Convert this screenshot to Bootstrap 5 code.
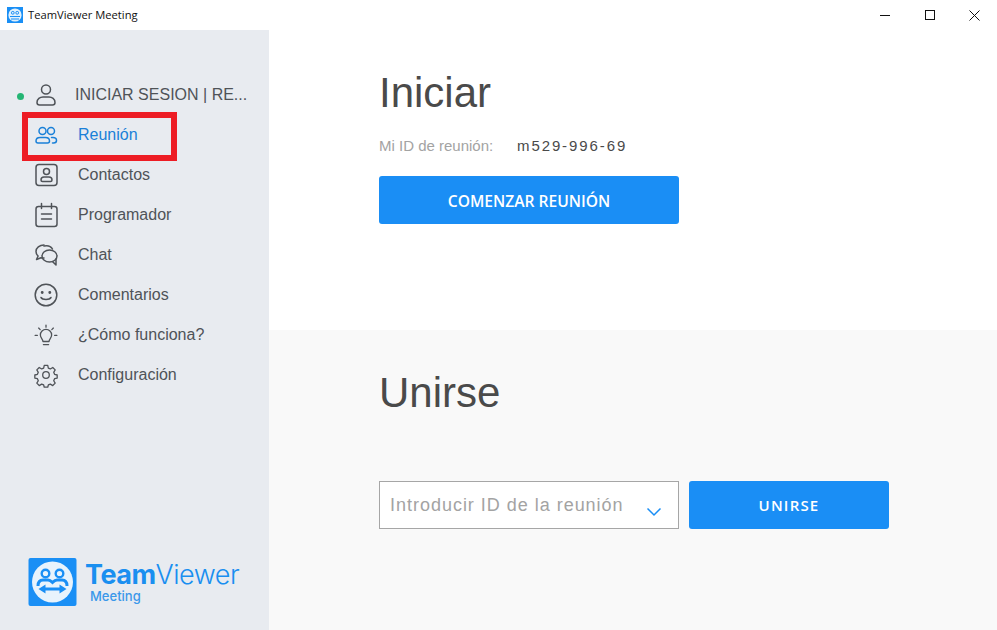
<!DOCTYPE html>
<html lang="en">
<head>
  <meta charset="UTF-8">
  <title>TeamViewer Meeting</title>
  <link href="https://cdn.jsdelivr.net/npm/bootstrap@5.3.2/dist/css/bootstrap.min.css" rel="stylesheet">
  <style>
    body { width: 997px; height: 630px; overflow: hidden; background: #fff; font-family: "Liberation Sans", sans-serif; color: #4a4a4a; }
    .win-bar { height: 30px; padding-left: 7px; }
    .win-title { font-family: "Open Sans", sans-serif; font-size: 11.2px; color: #111; margin-left: 5px; }
    .win-btn { width: 45px; height: 30px; }
    .win-body { height: 600px; }
    .side-pane { width: 269px; background: #e8ebf0; padding-top: 45px; }
    .side-item { height: 40px; padding-left: 33px; font-size: 16px; color: #4f5358; text-decoration: none; }
    .side-item svg { width: 26px; height: 26px; flex: none; margin-right: 19px; fill: none; stroke: currentColor; stroke-width: 1.5; stroke-linecap: round; stroke-linejoin: round; }
    .side-item.is-active { color: #1a80d8; }
    .side-user { padding-left: 17px; }
    .side-user svg { margin-right: 16px; }
    .status-dot { width: 7px; height: 7px; border-radius: 50%; background: #25b574; flex: none; margin-right: 9px; margin-top: 3px; }
    .user-name { white-space: nowrap; }
    .red-frame { position: absolute; left: 22px; top: 112px; width: 155px; height: 49px; border: 6px solid #ed1c24; }
    .logo-wrap { padding-left: 28px; padding-bottom: 24px; }
    .logo-name { font-family: "Inter", sans-serif; font-size: 27px; line-height: 28px; color: #1a8ff0; letter-spacing: -.5px; }
    .logo-name b { font-weight: 700; }
    .logo-name span { font-weight: 300; }
    .logo-sub { font-family: "Inter", sans-serif; font-size: 13px; line-height: 14px; font-weight: 500; color: #3a98ea; padding-left: 5px; }
    .start-pane { height: 300px; padding: 36px 0 0 110px; }
    .join-pane { height: 300px; background: #f9f9f9; padding: 36px 0 0 110px; }
    .pane-title { font-family: "Liberation Sans", sans-serif; font-size: 42px; line-height: 54px; font-weight: 400; color: #4a4a4a; margin: 0; }
    .id-row { margin-top: 16px; height: 20px; }
    .id-label { width: 138px; font-size: 15px; color: #a3a3a3; white-space: nowrap; }
    .id-value { font-size: 15px; letter-spacing: 1.9px; color: #4a4a4a; }
    .tv-btn { background: #1a8ef5; color: #fff; border: 0; border-radius: 3px; height: 48px; font-family: "Open Sans", sans-serif; font-weight: 600; }
    .tv-btn:hover { background: #1a8ef5; color: #fff; }
    .btn-start { width: 300px; margin-top: 20px; padding-top: 10px; font-size: 15.6px; }
    .btn-join { width: 200px; font-size: 15px; letter-spacing: 1.2px; }
    .join-row { margin-top: 61px; gap: 10px; }
    .join-input { width: 300px; height: 48px; background: #fff; border: 1px solid #a6a6a6; padding-left: 10px; font-size: 18px; letter-spacing: .98px; color: #a3a3a3; white-space: nowrap; }
    .join-input svg { position: absolute; left: 266px; top: 25px; }
  </style>
</head>
<body>
  <div class="win-bar d-flex align-items-center">
    <svg width="16" height="16" viewBox="0 0 16 16">
      <rect width="16" height="16" fill="#1a8ff5"/>
      <circle cx="8" cy="8" r="6.6" fill="#dff0fd"/>
      <circle cx="5.8" cy="5.8" r="1.4" fill="none" stroke="#1a8ff5"/>
      <circle cx="10.2" cy="5.8" r="1.4" fill="none" stroke="#1a8ff5"/>
      <path d="M3 9.5h10M4 12h8" stroke="#1a8ff5" fill="none"/>
    </svg>
    <span class="win-title">TeamViewer Meeting</span>
    <div class="ms-auto d-flex">
      <div class="win-btn d-flex align-items-center justify-content-center">
        <svg width="10" height="10" viewBox="0 0 10 10"><path d="M0 5.5h10" stroke="#111"/></svg>
      </div>
      <div class="win-btn d-flex align-items-center justify-content-center">
        <svg width="10" height="10" viewBox="0 0 10 10"><rect x=".5" y=".5" width="9" height="9" fill="none" stroke="#111"/></svg>
      </div>
      <div class="win-btn d-flex align-items-center justify-content-center">
        <svg width="11" height="11" viewBox="0 0 11 11"><path d="M.5.5l10 10M10.5.5l-10 10" stroke="#111"/></svg>
      </div>
    </div>
  </div>

  <div class="win-body d-flex">
    <div class="side-pane d-flex flex-column">
      <div class="side-item side-user d-flex align-items-center">
        <span class="status-dot"></span>
        <svg viewBox="0 0 26 26"><circle cx="13" cy="7.5" r="4.5"/><path d="M6.5 23h13a2.5 2.5 0 0 0 2.5-2.5c0-3.500-3-5.500-6-5.500h-6c-3 0-6 2-6 5.500A2.500 2.500 0 0 0 6.500 23z"/></svg>
        <span class="user-name">INICIAR SESION | RE...</span>
      </div>
      <a class="side-item is-active d-flex align-items-center" href="#">
        <svg viewBox="0 0 26 26"><circle cx="9.500" cy="9" r="3.500"/><circle cx="18" cy="9" r="3.500"/><path d="M5 21h9.500a2 2 0 0 0 2-2c0-2-1.500-3.500-4-3.500H7c-2.500 0-4 1.500-4 3.500a2 2 0 0 0 2 2zM18.500 15.500h1.500c2.500 0 3.500 1.500 3.500 3s-1 2.500-3 2.500h-1"/></svg>
        Reunión
      </a>
      <a class="side-item d-flex align-items-center" href="#">
        <svg viewBox="0 0 26 26"><rect x="3" y="2.500" width="21" height="21" rx="3"/><circle cx="13.500" cy="9.500" r="3"/><path d="M9.500 19.500h8a1.500 1.500 0 0 0 1.500-1.500c0-2-1.500-3-3-3h-5c-1.500 0-3 1-3 3a1.500 1.500 0 0 0 1.500 1.500z"/></svg>
        Contactos
      </a>
      <a class="side-item d-flex align-items-center" href="#">
        <svg viewBox="0 0 26 26"><rect x="3" y="4.500" width="21" height="20" rx="2.500"/><path d="M8.500 1.500v5M18.500 1.500v5M8.500 12h10M8.500 17h10"/></svg>
        Programador
      </a>
      <a class="side-item d-flex align-items-center" href="#">
        <svg viewBox="0 0 26 26"><path d="M11 3c-4.500 0-8 2.800-8 6.500 0 1.800.8 3.300 2.100 4.500L3.500 17.500l4.500-1.800c1 .3 2 .4 3 .4"/><path d="M11 4c3.500-.8 7 .4 8.500 3"/><ellipse cx="16.500" cy="14" rx="7.500" ry="6"/><path d="M19.500 19.500l3.500 3.500v-6"/></svg>
        Chat
      </a>
      <a class="side-item d-flex align-items-center" href="#">
        <svg viewBox="0 0 26 26"><circle cx="13" cy="13" r="10.800"/><circle cx="9.200" cy="10.500" r=".7" fill="currentColor"/><circle cx="16.800" cy="10.500" r=".7" fill="currentColor"/><path d="M8 15.500c1.500 2.500 8.500 2.500 10 0"/></svg>
        Comentarios
      </a>
      <a class="side-item d-flex align-items-center" href="#">
        <svg viewBox="-2 -3 30 30"><path d="M9.500 19.500c0-3-3-4-3-7.500a6.500 6.500 0 0 1 13 0c0 3.500-3 4.500-3 7.500zM10 23h6M13 .5v2.500M4.500 4l1.800 1.800M21.500 4l-1.800 1.800M.5 12.500h2.500M23 12.500h2.500"/></svg>
        ¿Cómo funciona?
      </a>
      <a class="side-item d-flex align-items-center" href="#">
        <svg viewBox="-2 -2 30 30"><circle cx="13" cy="13" r="3.800"/><path d="M11 1.800h4l.7 3.200 2.300 1 2.800-1.700 2.800 2.800-1.700 2.800 1 2.300 3 .8v3.500l-3 .8-1 2.300 1.700 2.800-2.800 2.800-2.800-1.700-2.300 1-.7 2.600h-4l-.7-2.600-2.300-1-2.800 1.700-2.800-2.800 1.700-2.800-1-2.300-3-.8v-3.500l3-.8 1-2.300-1.700-2.800 2.800-2.800 2.800 1.700 2.300-1z"/></svg>
        Configuración
      </a>

      <div class="logo-wrap mt-auto d-flex align-items-center">
        <svg class="me-2" width="49" height="48" viewBox="0 0 48 48">
          <rect width="48" height="48" rx="2" fill="#1a8ff5"/>
          <circle cx="24" cy="24" r="20.500" fill="#e8f3fc"/>
          <circle cx="17" cy="15.500" r="3.800" fill="none" stroke="#1a8ff5" stroke-width="2.400"/>
          <circle cx="31" cy="15.500" r="3.800" fill="none" stroke="#1a8ff5" stroke-width="2.400"/>
          <path d="M9.500 28c0-4 2-6 5-6h5c2 0 3 1 4.500 2.500C25.500 23 26.500 22 28.500 22h5c3 0 5 2 5 6" fill="none" stroke="#1a8ff5" stroke-width="3"/>
          <path d="M10 31l7-4.500V29.500h14V26.500l7 4.500-7 4.500V32.500H17v3z" fill="#1a8ff5"/>
        </svg>
        <div>
          <div class="logo-name"><b>Team</b><span>Viewer</span></div>
          <div class="logo-sub">Meeting</div>
        </div>
      </div>
    </div>

    <div class="flex-grow-1">
      <div class="start-pane">
        <h1 class="pane-title">Iniciar</h1>
        <div class="id-row d-flex align-items-center">
          <span class="id-label">Mi ID de reunión:</span>
          <span class="id-value">m529-996-69</span>
        </div>
        <button type="button" class="btn tv-btn btn-start d-block">COMENZAR REUNIÓN</button>
      </div>
      <div class="join-pane">
        <h1 class="pane-title">Unirse</h1>
        <div class="join-row d-flex">
          <div class="join-input position-relative d-flex align-items-center">
            Introducir ID de la reunión
            <svg width="16" height="10" viewBox="0 0 16 10"><path d="M1.500 1.500l6.500 6.500 6.500-6.500" fill="none" stroke="#1a8ef5" stroke-width="1.500"/></svg>
          </div>
          <button type="button" class="btn tv-btn btn-join">UNIRSE</button>
        </div>
      </div>
    </div>
  </div>

  <div class="red-frame"></div>

  <script src="https://cdn.jsdelivr.net/npm/bootstrap@5.3.2/dist/js/bootstrap.bundle.min.js"></script>
</body>
</html>
